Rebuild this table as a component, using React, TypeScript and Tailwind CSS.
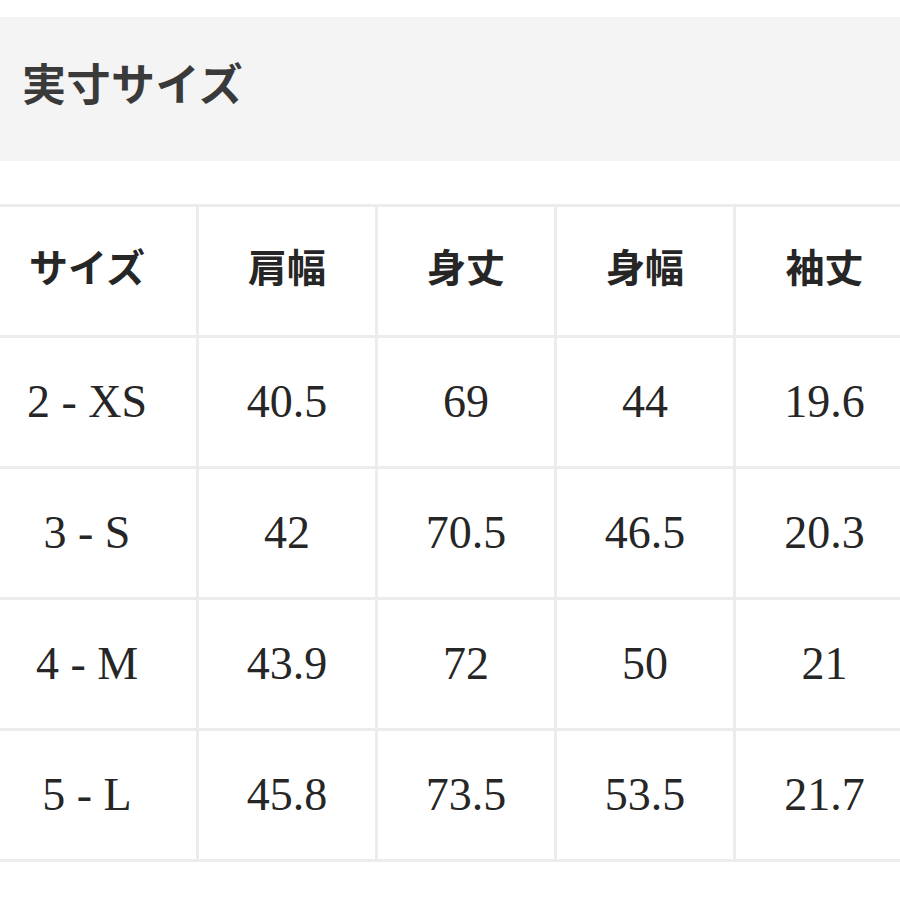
const headers = ["サイズ", "肩幅", "身丈", "身幅", "袖丈"];

const rows = [
  ["2 - XS", "40.5", "69", "44", "19.6"],
  ["3 - S", "42", "70.5", "46.5", "20.3"],
  ["4 - M", "43.9", "72", "50", "21"],
  ["5 - L", "45.8", "73.5", "53.5", "21.7"],
];

// first column's content sits a little left of its centre
const colClass = [
  "w-[199px] pr-[22px]",
  "w-[179px]",
  "w-[179px]",
  "w-[179px]",
  "w-[180px]",
];

export default function App() {
  return (
    <div className="w-[900px] h-[900px] bg-white overflow-hidden text-[#262626]">
      <div className="mt-[17px] h-[144px] bg-[#f4f4f4] flex items-center pl-[22px] pb-[14px]">
        <h2 className="text-[44px] font-bold tracking-[0.5px] text-[#3a3a3a] [font-family:'Noto_Sans_CJK_JP',sans-serif]">
          実寸サイズ
        </h2>
      </div>

      <div className="mt-[43px] w-[916px] border-t-[3px] border-[#ececec] flex flex-col [font-family:'Liberation_Serif','Noto_Sans_CJK_JP',serif]">
        <div className="flex h-[131px]">
          {headers.map((h, i) => (
            <div
              key={h}
              className={`${colClass[i]} shrink-0 border-r-[3px] border-b-[3px] border-[#ececec] flex items-center justify-center text-[39px] font-bold pb-[3px]`}
            >
              {h}
            </div>
          ))}
        </div>
        {rows.map((r) => (
          <div key={r[0]} className="flex h-[131px]">
            {r.map((v, i) => (
              <div
                key={i}
                className={`${colClass[i]} shrink-0 border-r-[3px] border-b-[3px] border-[#ececec] flex items-center justify-center text-[46px] pb-[2px]`}
              >
                {v}
              </div>
            ))}
          </div>
        ))}
      </div>
    </div>
  );
}
